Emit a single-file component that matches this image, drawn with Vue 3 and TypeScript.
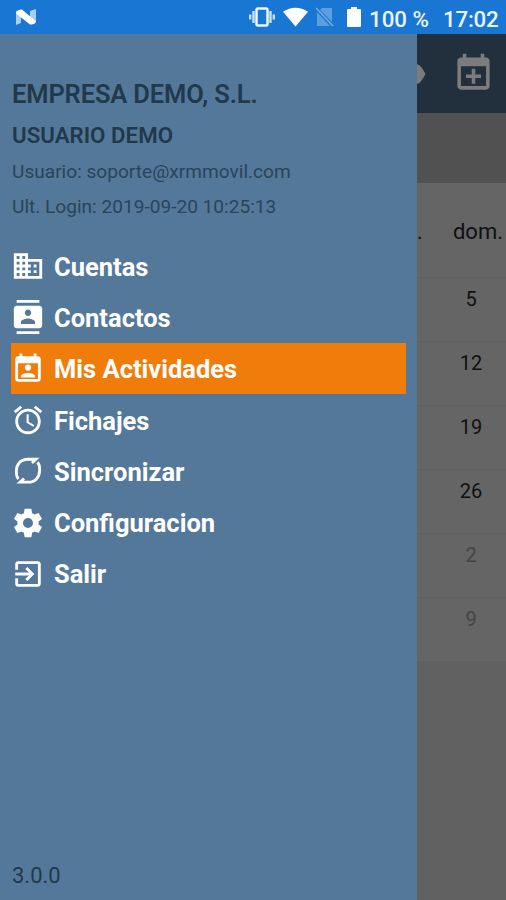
<script setup lang="ts">
interface MenuItem {
  label: string
  path: string
  active?: boolean
  line?: boolean
}

const menu: MenuItem[] = [
  { label: 'Cuentas', path: 'M12 7V3H2v18h20V7H12zM6 19H4v-2h2v2zm0-4H4v-2h2v2zm0-4H4V9h2v2zm0-4H4V5h2v2zm4 12H8v-2h2v2zm0-4H8v-2h2v2zm0-4H8V9h2v2zm0-4H8V5h2v2zm10 12h-8v-2h2v-2h-2v-2h2v-2h-2V9h8v10zm-2-8h-2v2h2v-2zm0 4h-2v2h2v-2z' },
  { label: 'Contactos', path: 'M20 0H4v2h16V0zM4 24h16v-2H4v2zM20 4H4c-1.100 0-2 .9-2 2v12c0 1.100.9 2 2 2h16c1.100 0 2-.9 2-2V6c0-1.100-.9-2-2-2zm-8 2.750c1.240 0 2.250 1.010 2.250 2.250s-1.010 2.250-2.250 2.250S9.750 10.240 9.750 9 10.760 6.750 12 6.750zM17 17H7v-1.500c0-1.670 3.330-2.500 5-2.500s5 .83 5 2.500V17z' },
  { label: 'Mis Actividades', active: true, path: 'M19 3h-1V1h-2v2H8V1H6v2H5c-1.110 0-2 .9-2 2v14c0 1.100.89 2 2 2h14c1.100 0 2-.9 2-2V5c0-1.100-.9-2-2-2zm0 16H5V8h14v11zM12 8.800a2.200 2.200 0 1 0 0 4.400 2.200 2.200 0 0 0 0-4.400zm5 9.200v-.9c0-1.500-3.330-2.300-5-2.300s-5 .8-5 2.300v.9h10z' },
  { label: 'Fichajes', path: 'M22 5.720l-4.600-3.860-1.290 1.530 4.600 3.860L22 5.720zM7.880 3.390L6.600 1.860 2 5.710l1.290 1.530 4.590-3.850zM12.500 8H11v6l4.750 2.850.75-1.230-4-2.370V8zM12 4c-4.970 0-9 4.030-9 9s4.020 9 9 9c4.970 0 9-4.030 9-9s-4.030-9-9-9zm0 16c-3.870 0-7-3.130-7-7s3.130-7 7-7 7 3.130 7 7-3.130 7-7 7z' },
  { label: 'Sincronizar', line: true, path: 'M5.300 17.700C3.600 16 3.800 14 3.800 12C3.800 7 7 3.700 12 3.700h5.600l-2.800 2.600M18.700 5.800C20.400 7.500 20.200 9.500 20.200 11.500C20.200 16.500 17 19.900 12 19.900H6.400l2.800-2.600' },
  { label: 'Configuracion', path: 'M19.430 12.980c.04-.32.070-.64.070-.98s-.03-.66-.07-.98l2.110-1.650c.19-.15.240-.42.120-.64l-2-3.460c-.12-.22-.39-.3-.61-.22l-2.490 1c-.52-.4-1.080-.73-1.690-.98l-.38-2.650C14.460 2.180 14.250 2 14 2h-4c-.25 0-.46.180-.49.420l-.38 2.650c-.61.250-1.170.590-1.690.980l-2.490-1c-.23-.09-.49 0-.61.220l-2 3.460c-.13.220-.07.490.120.640l2.110 1.650c-.04.320-.07.650-.07.980s.03.660.070.980l-2.110 1.650c-.19.150-.24.420-.12.640l2 3.460c.12.220.390.300.610.220l2.490-1c.52.400 1.080.730 1.690.980l.38 2.650c.03.240.240.420.490.420h4c.25 0 .46-.18.490-.42l.38-2.650c.61-.25 1.170-.59 1.690-.98l2.490 1c.23.090.490 0 .610-.22l2-3.460c.12-.22.070-.49-.12-.64l-2.110-1.650zM12 15.500c-1.930 0-3.500-1.570-3.500-3.500s1.570-3.500 3.500-3.500 3.500 1.570 3.500 3.500-1.570 3.500-3.500 3.500z' },
  { label: 'Salir', path: 'M10.090 15.590L11.500 17l5-5-5-5-1.410 1.410L12.670 11H3v2h9.670l-2.580 2.590zM19 3H5c-1.110 0-2 .9-2 2v4h2V5h14v14H5v-4H3v4c0 1.100.89 2 2 2h14c1.100 0 2-.9 2-2V5c0-1.100-.9-2-2-2z' },
]

const sundays = [
  { day: 5, muted: false },
  { day: 12, muted: false },
  { day: 19, muted: false },
  { day: 26, muted: false },
  { day: 2, muted: true },
  { day: 9, muted: true },
]
</script>

<template>
  <div class="screen">
    <header class="status">
      <svg class="nougat" viewBox="0 0 20 16">
        <path d="M0 2.500L5 1v13l-5 2zM14 2l6-2v13l-6 2z" fill="#a9cff5" />
        <path d="M0 3Q2 0 6 .5L20 12.500q-1 3.500-6 3L0 4.500z" fill="#fff" />
      </svg>
      <div class="indicators">
        <svg class="vibrate" viewBox="0 0 26 20">
          <rect x="7.500" y="1.500" width="11" height="17" rx="1.500" fill="none" stroke="#eef6ff" stroke-width="2.500" />
          <path d="M4.500 4v12M21.500 4v12M1.200 7.500v5M24.800 7.500v5" stroke="#c9e1fa" stroke-width="2.400" />
        </svg>
        <svg class="wifi" viewBox="0 0 26 20"><path d="M0 4.500Q13-4 26 4.500L13 20z" fill="#fff" /></svg>
        <svg class="sim" viewBox="0 0 18 20">
          <path d="M6 1h10v14L4 3zM1 5l13 14H1z" fill="#5b9fe2" />
          <path d="M0 1l17 18" stroke="#75afe8" stroke-width="1.500" />
        </svg>
        <svg class="battery" viewBox="0 0 14 20"><path d="M4 0h6v2h3q1 0 1 1v16q0 1-1 1H1q-1 0-1-1V3q0-1 1-1h3z" fill="#fff" /></svg>
        <span class="percent">100 %</span>
        <span class="clock">17:02</span>
      </div>
    </header>
    <div class="content">
      <aside class="drawer">
        <div class="account">
          <h1>EMPRESA DEMO, S.L.</h1>
          <h2>USUARIO DEMO</h2>
          <p class="mail">Usuario: soporte@xrmmovil.com</p>
          <p class="login">Ult. Login: 2019-09-20 10:25:13</p>
        </div>
        <nav class="menu">
          <a v-for="item in menu" :key="item.label" class="item" :class="{ active: item.active }">
            <svg class="icon" :class="{ line: item.line }" viewBox="0 0 24 24"><path :d="item.path" /></svg>
            <span>{{ item.label }}</span>
          </a>
        </nav>
        <footer class="version">3.0.0</footer>
      </aside>
      <main class="agenda">
        <div class="toolbar">
          <svg class="tag" viewBox="0 0 9 20"><path d="M0 0Q3 1 5 4l3 5q.6 1 0 2l-3 5q-2 3-5 4z" /></svg>
          <svg class="add" viewBox="0 0 24 24"><path d="M19 3h-1V1h-2v2H8V1H6v2H5c-1.100 0-2 .9-2 2v14c0 1.100.9 2 2 2h14c1.100 0 2-.9 2-2V5c0-1.100-.9-2-2-2zm0 16H5V8h14v11zM11 9.300h2v3.200h3.200v2H13v3.200h-2v-3.200H7.800v-2H11z" /></svg>
        </div>
        <div class="band"></div>
        <div class="weekdays"><span>.</span><span class="sunday">dom.</span></div>
        <div v-for="s in sundays" :key="s.day" class="day" :class="{ muted: s.muted }">{{ s.day }}</div>
      </main>
    </div>
  </div>
</template>

<style>
body {
  margin: 0;
}
</style>

<style scoped>
.screen {
  width: 506px;
  height: 900px;
  display: flex;
  flex-direction: column;
  overflow: hidden;
  font-family: Roboto, "Liberation Sans", sans-serif;
  background: #616161;
}
svg {
  display: block;
  flex: none;
}
.status {
  height: 34px;
  flex: none;
  box-sizing: border-box;
  padding: 0 8px 0 16px;
  display: flex;
  align-items: center;
  justify-content: space-between;
  background: #1976d2;
  color: #eaf4ff;
}
.nougat {
  width: 20px;
  height: 16px;
}
.indicators {
  display: flex;
  align-items: center;
  font-size: 22.300px;
  font-weight: 500;
  line-height: 34px;
  white-space: nowrap;
}
.vibrate {
  width: 26px;
  height: 20px;
  margin-right: 8px;
}
.wifi {
  width: 25px;
  height: 20px;
  margin-right: 8px;
}
.sim {
  width: 18px;
  height: 20px;
  margin-right: 13px;
}
.battery {
  width: 14px;
  height: 20px;
  margin-right: 8px;
}
.percent {
  width: 74px;
  padding-top: 3px;
}
.clock {
  width: 55px;
  padding-top: 3px;
  letter-spacing: -0.200px;
}
.content {
  flex: 1;
  display: flex;
  min-height: 0;
}
.drawer {
  width: 417px;
  flex: none;
  box-sizing: border-box;
  padding: 42px 11px 7px;
  display: flex;
  flex-direction: column;
  background: #54789a;
  color: #22384b;
}
.account {
  height: 164px;
  padding-left: 1px;
  white-space: nowrap;
}
h1,
h2,
p {
  margin: 0;
}
h1 {
  font-size: 25.500px;
  font-weight: 600;
  line-height: 36px;
  letter-spacing: -0.150px;
}
h2 {
  margin-top: 5px;
  font-size: 22.300px;
  font-weight: 600;
  line-height: 36px;
}
p {
  font-size: 19.100px;
  line-height: 35px;
  color: #2a4459;
}
.mail {
  margin-top: 1px;
}
.menu {
  display: flex;
  flex-direction: column;
}
.item {
  height: 51.300px;
  display: flex;
  align-items: center;
  gap: 9px;
  color: #fff;
  font-size: 25.500px;
  font-weight: 700;
}
.item span {
  padding-top: 2px;
}
.active {
  background: #f07c0a;
}
.icon {
  width: 34px;
  height: 34px;
  margin-top: 1px;
  fill: currentColor;
}
.line {
  fill: none;
  stroke: currentColor;
  stroke-width: 2;
}
.version {
  margin-top: auto;
  padding-left: 1px;
  font-size: 22px;
  line-height: 34px;
}
.agenda {
  flex: 1;
  min-width: 0;
  color: #101010;
}
.toolbar {
  height: 79px;
  display: flex;
  align-items: center;
  background: #222f3d;
  fill: #7c7c7c;
}
.tag {
  width: 9px;
  height: 20px;
}
.add {
  width: 43px;
  height: 43px;
  margin-left: 26px;
}
.band {
  height: 70px;
  background: #515151;
}
.weekdays {
  height: 95px;
  box-sizing: border-box;
  border-bottom: 1px solid #616161;
  display: flex;
  justify-content: space-between;
  padding: 0 3px 0 0;
  background: #656565;
  font-size: 22px;
  line-height: 98px;
}
.day {
  height: 64px;
  box-sizing: border-box;
  border-bottom: 1px solid #616161;
  padding-left: 19px;
  background: #656565;
  text-align: center;
  font-size: 20px;
  line-height: 43px;
}
.muted {
  color: #444;
}
</style>
